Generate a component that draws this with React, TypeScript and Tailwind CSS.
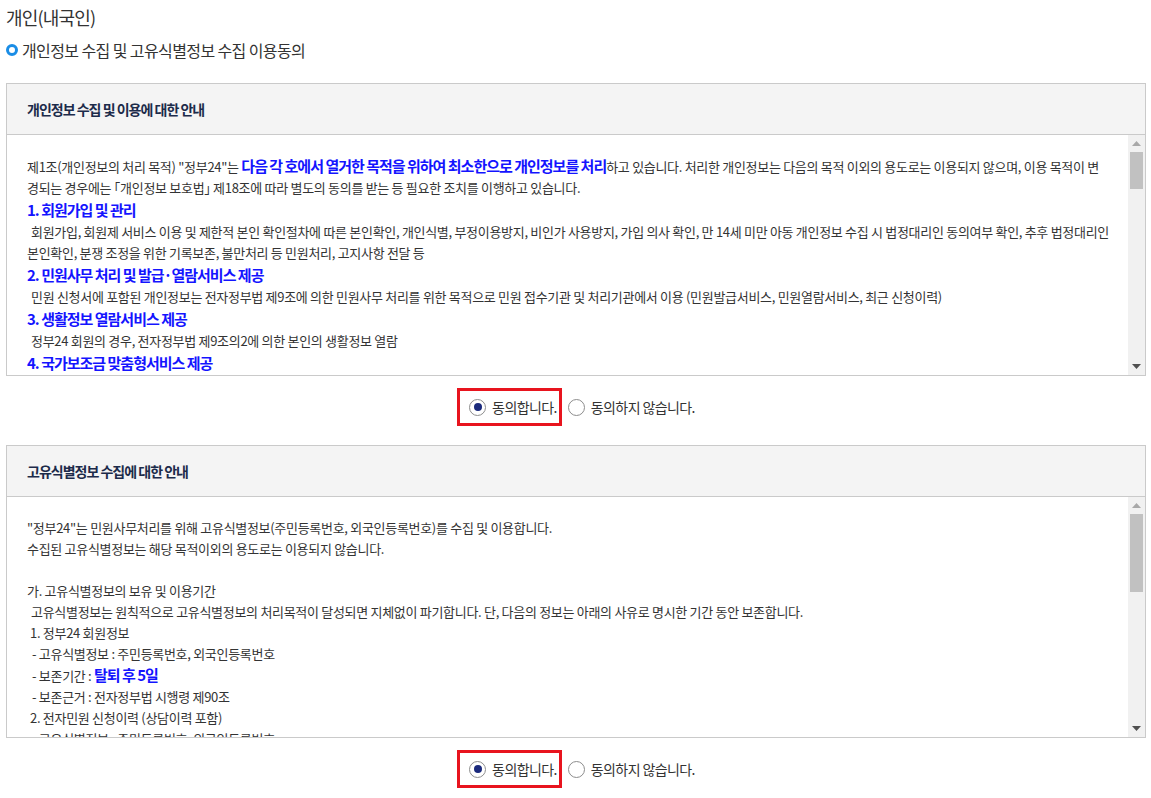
import React from "react";

const head = "font-bold text-[15px] tracking-[-1px] text-[#1414ff]";

const Scrollbar = ({ thumb }: { thumb: string }) => (
    <div className="flex flex-col w-[17px] shrink-0 bg-[#f1f1f1]">
        <div className="h-[17px] flex items-center justify-center">
            <svg width="9" height="5" viewBox="0 0 9 5">
                <path d="M4.5 0L9 5H0z" fill="#a8a8a8" />
            </svg>
        </div>
        <div className={`mx-[2px] bg-[#c1c1c1] ${thumb}`} />
        <div className="flex-1" />
        <div className="h-[17px] flex items-center justify-center">
            <svg width="9" height="5" viewBox="0 0 9 5">
                <path d="M0 0H9L4.5 5z" fill="#505050" />
            </svg>
        </div>
    </div>
);

const Radio = ({ checked }: { checked?: boolean }) => (
    <span className="w-[17px] h-[17px] rounded-full border border-[#8d8d8d] bg-white flex items-center justify-center shrink-0">
        {checked && <span className="w-[8px] h-[8px] rounded-full bg-[#1b2a7c]" />}
    </span>
);

const AgreeRow = ({ last }: { last?: boolean }) => (
    <div className={`flex justify-center items-center pt-3 ${last ? "pb-2" : "pb-[19px]"}`}>
        <label className="flex items-center h-[38px] border-[3px] border-[#e8141e] pl-[9px] pr-[2px]">
            <Radio checked />
            <span className="ml-[6px] text-[14px] tracking-[-0.6px] text-[#333]">동의합니다.</span>
        </label>
        <label className="flex items-center ml-[6px]">
            <Radio />
            <span className="ml-[6px] text-[14px] tracking-[-0.6px] text-[#333]">동의하지 않습니다.</span>
        </label>
    </div>
);

const Box = ({ title, thumb, children }: { title: string; thumb: string; children: React.ReactNode }) => (
    <div className="border border-[#cacaca]">
        <div className="h-[51px] bg-[#f4f4f4] border-b border-[#cacaca] flex items-center pl-5 text-[14px] font-bold tracking-[-1px] text-[#1c2b4a]">
            {title}
        </div>
        <div className="flex h-[240px]">
            <div className="flex-1 overflow-hidden pl-5 pt-5 text-[13px] tracking-[-0.3px] text-[#333] whitespace-nowrap">
                {children}
            </div>
            <Scrollbar thumb={thumb} />
        </div>
    </div>
);

const Bracket = ({ children }: { children: React.ReactNode }) => (
    <span className="[font-feature-settings:'halt']">{children}</span>
);

export default function App() {
    return (
        <div className="min-h-screen bg-white pl-[6px] pr-[5px] pt-[5px] font-['Noto_Sans_CJK_KR',sans-serif]">
            <h2 className="h-6 leading-6 text-[18px] tracking-[-0.8px] text-[#333] font-normal">개인(내국인)</h2>
            <div className="mt-[9px] mb-[21px] h-6 flex items-center">
                <span className="w-3 h-3 rounded-full border-[3px] border-[#1a8de6]" />
                <span className="ml-1 text-[16px] tracking-[-0.6px] text-[#333]">개인정보 수집 및 고유식별정보 수집 이용동의</span>
            </div>

            <Box title="개인정보 수집 및 이용에 대한 안내" thumb="h-[37px]">
                <p className="leading-[21px]">
                    제1조(개인정보의 처리 목적) "정부24"는 <span className={head}>다음 각 호에서 열거한 목적을 위하여 최소한으로 개인정보를 처리</span>하고 있습니다. 처리한 개인정보는 다음의 목적 이외의 용도로는 이용되지 않으며, 이용 목적이 변
                </p>
                <p className="leading-[21px]">
                    경되는 경우에는 <Bracket>「</Bracket>개인정보 보호법<Bracket>」</Bracket> 제18조에 따라 별도의 동의를 받는 등 필요한 조치를 이행하고 있습니다.
                </p>
                <p className={`leading-[23px] ${head}`}>1. 회원가입 및 관리</p>
                <p className="leading-[21px] pl-[4px]">회원가입, 회원제 서비스 이용 및 제한적 본인 확인절차에 따른 본인확인, 개인식별, 부정이용방지, 비인가 사용방지, 가입 의사 확인, 만 14세 미만 아동 개인정보 수집 시 법정대리인 동의여부 확인, 추후 법정대리인</p>
                <p className="leading-[21px]">본인확인, 분쟁 조정을 위한 기록보존, 불만처리 등 민원처리, 고지사항 전달 등</p>
                <p className={`leading-[23px] ${head}`}>2. 민원사무 처리 및 발급·열람서비스 제공</p>
                <p className="leading-[21px] pl-[4px]">민원 신청서에 포함된 개인정보는 전자정부법 제9조에 의한 민원사무 처리를 위한 목적으로 민원 접수기관 및 처리기관에서 이용 (민원발급서비스, 민원열람서비스, 최근 신청이력)</p>
                <p className={`leading-[23px] ${head}`}>3. 생활정보 열람서비스 제공</p>
                <p className="leading-[21px] pl-[4px]">정부24 회원의 경우, 전자정부법 제9조의2에 의한 본인의 생활정보 열람</p>
                <p className={`leading-[23px] ${head}`}>4. 국가보조금 맞춤형서비스 제공</p>
                <p className="leading-[21px] pl-[4px]">정부24 회원의 경우, 국가보조금 맞춤형서비스 안내 및 신청</p>
            </Box>

            <AgreeRow />

            <Box title="고유식별정보 수집에 대한 안내" thumb="h-[78px]">
                <div className="leading-[21px]">
                    <p>"정부24"는 민원사무처리를 위해 고유식별정보(주민등록번호, 외국인등록번호)를 수집 및 이용합니다.</p>
                    <p>수집된 고유식별정보는 해당 목적이외의 용도로는 이용되지 않습니다.</p>
                    <p>&nbsp;</p>
                    <p>가. 고유식별정보의 보유 및 이용기간</p>
                    <p className="pl-[4px]">고유식별정보는 원칙적으로 고유식별정보의 처리목적이 달성되면 지체없이 파기합니다. 단, 다음의 정보는 아래의 사유로 명시한 기간 동안 보존합니다.</p>
                    <p className="pl-[3px]">1. 정부24 회원정보</p>
                    <p className="pl-[5px]">- 고유식별정보 : 주민등록번호, 외국인등록번호</p>
                    <p className="pl-[5px]">- 보존기간 : <span className={head}>탈퇴 후 5일</span></p>
                    <p className="pl-[5px]">- 보존근거 : 전자정부법 시행령 제90조</p>
                    <p className="pl-[3px]">2. 전자민원 신청이력 (상담이력 포함)</p>
                    <p className="pl-[5px]">- 고유식별정보 : 주민등록번호, 외국인등록번호</p>
                    <p className="pl-[5px]">- 보존기간 : 5년</p>
                </div>
            </Box>

            <AgreeRow last />
        </div>
    );
}
